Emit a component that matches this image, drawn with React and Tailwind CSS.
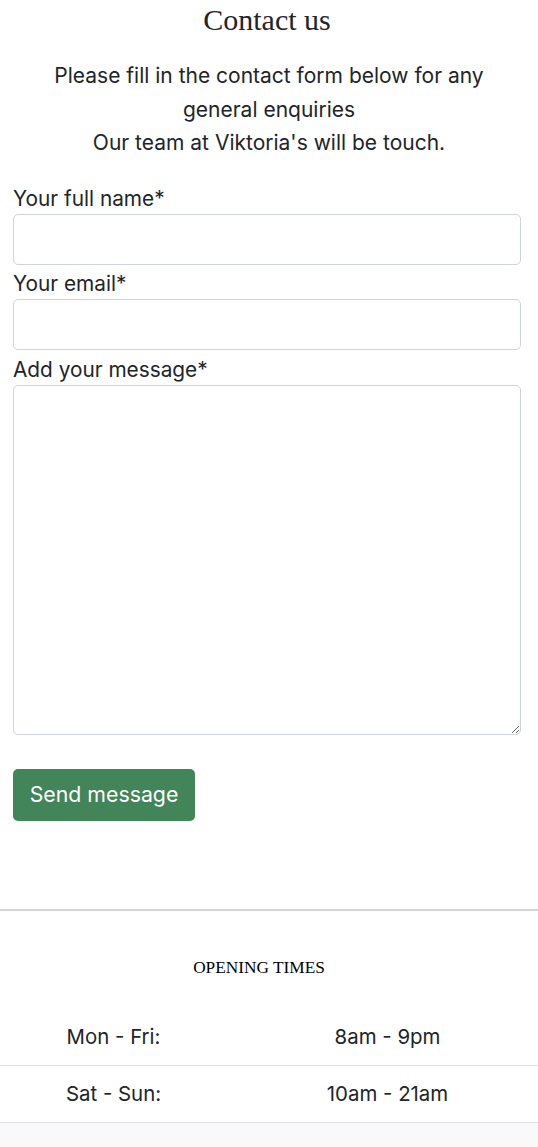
export default function App() {
  const sans = { fontFamily: "Inter, 'Noto Sans', sans-serif" };
  return (
    <div className="min-h-[1147px] bg-white text-[#212529]" style={sans}>
      <h1 className="m-0 pr-[4px] text-center text-[30px] leading-[40px] font-normal text-[#212529]" style={{ fontFamily: "'Liberation Serif', serif" }}>
        Contact us
      </h1>
      <p className="mx-auto mt-[19px] w-[470px] text-center text-[21px] leading-[33.5px]">
        Please fill in the contact form below for any general enquiries
        <br />
        Our team at Viktoria's will be touch.
      </p>
      <form className="mt-[22px] pl-[13px] pr-[17px] flex flex-col" onSubmit={(e) => e.preventDefault()}>
        <label className="block text-[20.8px] leading-[30px] h-[32px] pt-[2px]">Your full name*</label>
        <input type="text" className="block w-full h-[51px] rounded-[5px] border border-[#ced4da] bg-white" />
        <label className="block text-[20.8px] leading-[30px] h-[34px] pt-[4px]">Your email*</label>
        <input type="email" className="block w-full h-[51px] rounded-[5px] border border-[#ced4da] bg-white" />
        <label className="block text-[20.8px] leading-[30px] h-[35px] pt-[5px]">Add your message*</label>
        <textarea className="block w-full h-[350px] rounded-[5px] border border-[#ced4da] bg-white" />
        <div className="mt-[34px]">
          <button type="submit" className="h-[52px] w-[182px] rounded-[5px] bg-[#428558] text-white text-[21.3px]">
            Send message
          </button>
        </div>
      </form>
      <hr className="mt-[88px] border-0 border-t-2 border-[#d4d4d4]" />
      <h2 className="mt-[45px] pr-[20px] text-center text-[17.3px] leading-[24px] font-normal text-black" style={{ fontFamily: "'Liberation Serif', serif" }}>
        OPENING TIMES
      </h2>
      <div className="mt-[29px] text-[20.4px]">
        <div className="grid grid-cols-[237px_1fr] h-[57px] items-center border-b border-[#dee2e6]">
          <div className="text-center pr-[10px] pt-[2px]">Mon - Fri:</div>
          <div className="text-center pt-[2px]">8am - 9pm</div>
        </div>
        <div className="grid grid-cols-[237px_1fr] h-[57px] items-center border-b border-[#dee2e6]">
          <div className="text-center pr-[10px] pt-[2px]">Sat - Sun:</div>
          <div className="text-center pt-[2px]">10am - 21am</div>
        </div>
      </div>
      <div className="h-[40px] bg-[#f9f9f9]" />
    </div>
  );
}
